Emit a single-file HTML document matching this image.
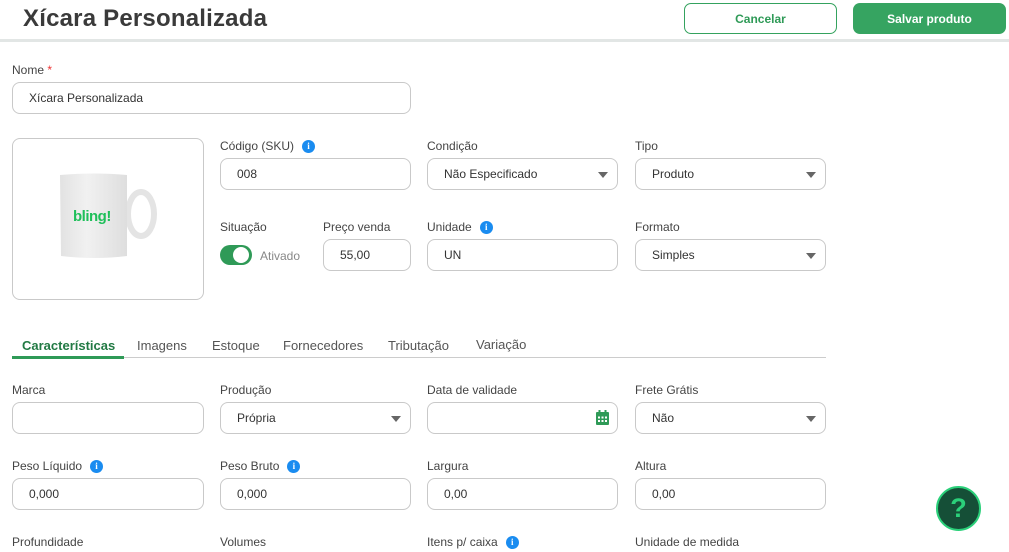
<!DOCTYPE html>
<html><head><meta charset="utf-8"><style>
*{box-sizing:border-box;margin:0;padding:0}
body{width:1009px;height:552px;overflow:hidden;background:#fff;font-family:"Liberation Sans",sans-serif;color:#333;position:relative}
.a{position:absolute}
.hdr{left:0;top:0;width:1009px;height:42px;background:#fff;border-bottom:3px solid #e2e6e5}
h1{position:absolute;left:23px;top:5px;font-size:24px;font-weight:bold;color:#3a3a3a;letter-spacing:0.2px}
.btn{position:absolute;top:3px;height:31px;width:153px;border-radius:7px;font-size:12px;font-weight:bold;display:flex;align-items:center;justify-content:center}
.lbl{position:absolute;font-size:12px;color:#444}
.in{position:absolute;height:32px;border:1px solid #c9c9c9;border-radius:8px;font-size:12px;color:#333;padding-left:16px;display:flex;align-items:center}
.dd::after{content:"";position:absolute;right:9px;top:13px;border-left:5px solid transparent;border-right:5px solid transparent;border-top:6px solid #666}
.i{display:inline-block;width:13px;height:13px;border-radius:50%;background:#1a8cf0;color:#fff;font-size:9px;font-weight:bold;text-align:center;line-height:13px;margin-left:8px;vertical-align:1px;font-family:"Liberation Serif",serif}
.tab{position:absolute;top:338px;font-size:13px;color:#555}
</style></head><body>
<div class="a hdr"></div>
<h1>Xícara Personalizada</h1>
<div class="btn" style="left:684px;border:1px solid #34a25e;color:#2f9a57;background:#fff">Cancelar</div>
<div class="btn" style="left:853px;background:#36a461;color:#fff">Salvar produto</div>

<div class="lbl" style="left:12px;top:63px">Nome <span style="color:#e33">*</span></div>
<div class="in" style="left:12px;top:82px;width:399px">Xícara Personalizada</div>

<div class="a" style="left:12px;top:138px;width:192px;height:162px;border:1px solid #c9c9c9;border-radius:8px"></div>
<svg class="a" style="left:55px;top:172px" width="105" height="92" viewBox="0 0 105 92">
<defs><linearGradient id="g" x1="0" x2="1"><stop offset="0" stop-color="#e2e2e2"/><stop offset="0.4" stop-color="#f1f1f1"/><stop offset="1" stop-color="#dedede"/></linearGradient></defs>
<ellipse cx="86" cy="42" rx="13" ry="22" fill="none" stroke="#e4e4e4" stroke-width="6"/>
<path d="M5 3 Q40 0 72 3 L72 84 Q40 88 6 84 Z" fill="url(#g)"/>
<text x="18" y="49" font-family="Liberation Sans" font-weight="bold" font-size="15" fill="#1fbf5a" letter-spacing="-0.5">bling!</text>
</svg>

<div class="lbl" style="left:220px;top:139px">Código (SKU)<span class="i">i</span></div>
<div class="in" style="left:220px;top:158px;width:191px">008</div>
<div class="lbl" style="left:427px;top:139px">Condição</div>
<div class="in dd" style="left:427px;top:158px;width:191px">Não Especificado</div>
<div class="lbl" style="left:635px;top:139px">Tipo</div>
<div class="in dd" style="left:635px;top:158px;width:191px">Produto</div>

<div class="lbl" style="left:220px;top:220px">Situação</div>
<div class="a" style="left:220px;top:245px;width:32px;height:20px;border-radius:10px;background:#2f9a57"></div>
<div class="a" style="left:233px;top:247px;width:16px;height:16px;border-radius:50%;background:#fff"></div>
<div class="lbl" style="left:260px;top:249px;color:#888">Ativado</div>
<div class="lbl" style="left:323px;top:220px">Preço venda</div>
<div class="in" style="left:323px;top:239px;width:88px">55,00</div>
<div class="lbl" style="left:427px;top:220px">Unidade<span class="i">i</span></div>
<div class="in" style="left:427px;top:239px;width:191px">UN</div>
<div class="lbl" style="left:635px;top:220px">Formato</div>
<div class="in dd" style="left:635px;top:239px;width:191px">Simples</div>

<div class="a" style="left:12px;top:357px;width:814px;height:1px;background:#ccc"></div>
<div class="a" style="left:12px;top:356px;width:112px;height:3px;background:#2f9a57"></div>
<div class="tab" style="left:22px;color:#227a44;font-weight:bold">Características</div>
<div class="tab" style="left:137px">Imagens</div>
<div class="tab" style="left:212px">Estoque</div>
<div class="tab" style="left:283px">Fornecedores</div>
<div class="tab" style="left:388px">Tributação</div>
<div class="tab" style="left:476px;top:337px">Variação</div>

<div class="lbl" style="left:12px;top:383px">Marca</div>
<div class="in" style="left:12px;top:402px;width:192px"></div>
<div class="lbl" style="left:220px;top:383px">Produção</div>
<div class="in dd" style="left:220px;top:402px;width:191px">Própria</div>
<div class="lbl" style="left:427px;top:383px">Data de validade</div>
<div class="in" style="left:427px;top:402px;width:191px"></div>
<svg class="a" style="left:596px;top:410px" width="13" height="15" viewBox="0 0 13 15"><rect x="0" y="2" width="13" height="13" rx="1" fill="#2f9a57"/><rect x="2.5" y="0" width="2" height="4" fill="#2f9a57"/><rect x="8.5" y="0" width="2" height="4" fill="#2f9a57"/><g fill="#fff"><rect x="2" y="6.5" width="2" height="2"/><rect x="5.5" y="6.5" width="2" height="2"/><rect x="9" y="6.5" width="2" height="2"/><rect x="2" y="10" width="2" height="2"/><rect x="5.5" y="10" width="2" height="2"/><rect x="9" y="10" width="2" height="2"/></g></svg>
<div class="lbl" style="left:635px;top:383px">Frete Grátis</div>
<div class="in dd" style="left:635px;top:402px;width:191px">Não</div>

<div class="lbl" style="left:12px;top:459px">Peso Líquido<span class="i">i</span></div>
<div class="in" style="left:12px;top:478px;width:192px">0,000</div>
<div class="lbl" style="left:220px;top:459px">Peso Bruto<span class="i">i</span></div>
<div class="in" style="left:220px;top:478px;width:191px">0,000</div>
<div class="lbl" style="left:427px;top:459px">Largura</div>
<div class="in" style="left:427px;top:478px;width:191px">0,00</div>
<div class="lbl" style="left:635px;top:459px">Altura</div>
<div class="in" style="left:635px;top:478px;width:191px">0,00</div>

<div class="lbl" style="left:12px;top:535px">Profundidade</div>
<div class="lbl" style="left:220px;top:535px">Volumes</div>
<div class="lbl" style="left:427px;top:535px">Itens p/ caixa<span class="i">i</span></div>
<div class="lbl" style="left:635px;top:535px">Unidade de medida</div>

<div class="a" style="left:936px;top:486px;width:45px;height:45px;border-radius:50%;background:#154f37;border:2px solid #2bd07a;color:#2bd07a;font-size:27px;font-weight:bold;text-align:center;line-height:40px">?</div>
</body></html>
